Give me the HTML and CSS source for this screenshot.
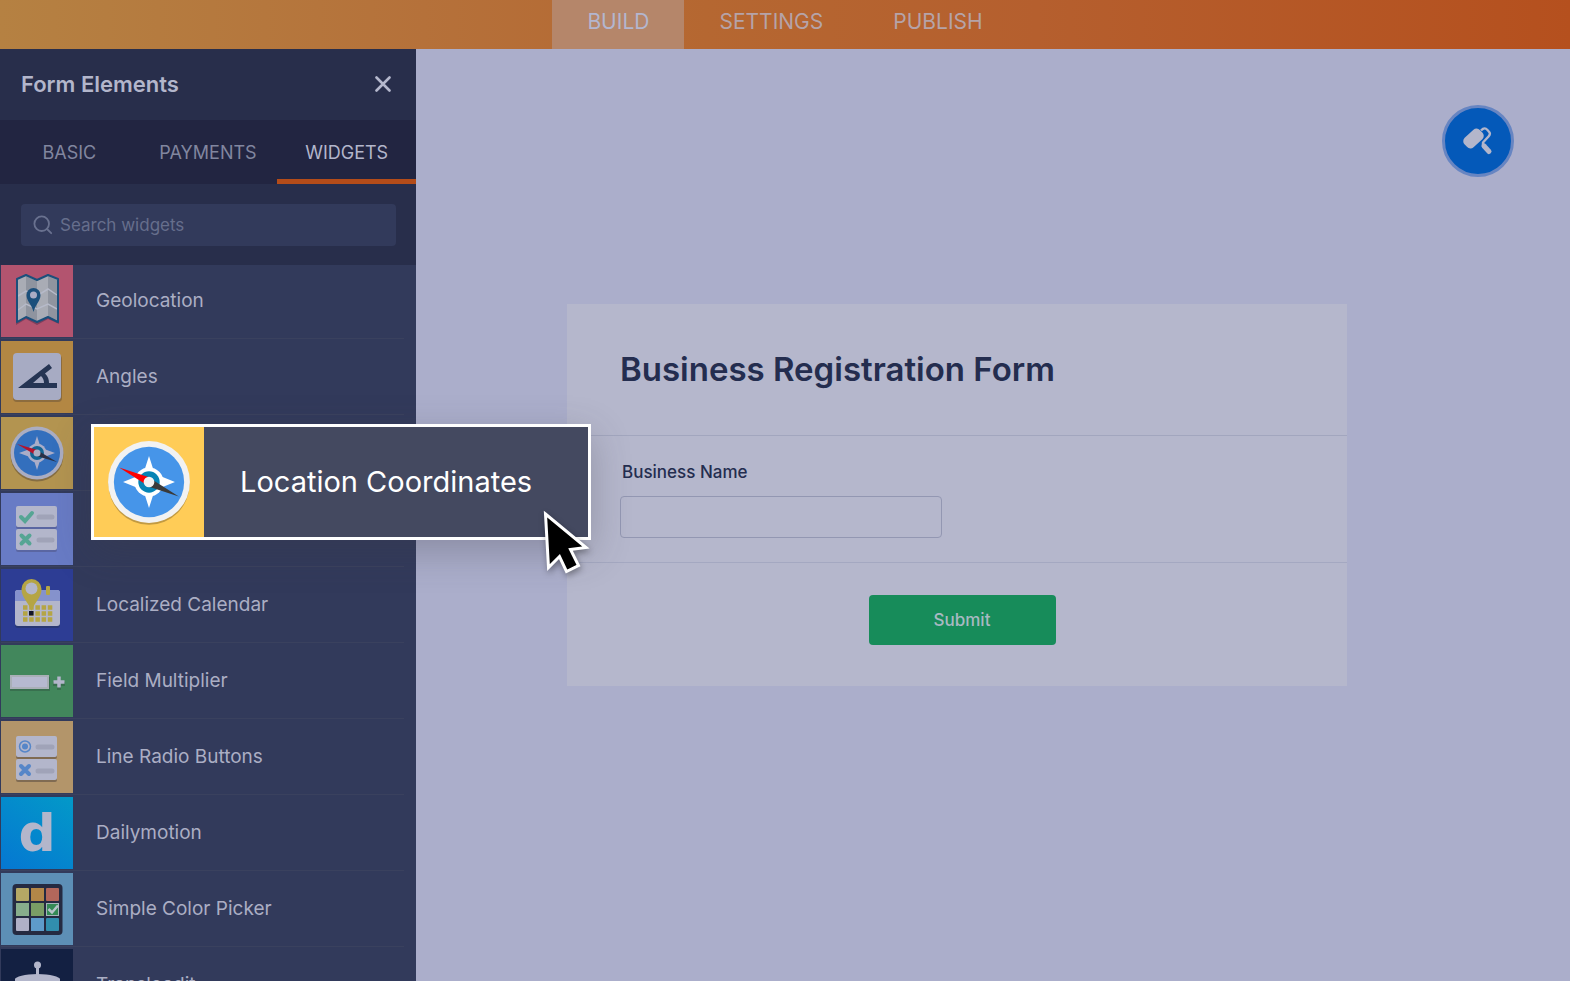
FILE: index.html
```html
<!DOCTYPE html>
<html lang="en">
<head>
  <meta charset="UTF-8" />
  <meta name="viewport" content="width=device-width, initial-scale=1.0"/>
  <title>Form Builder</title>
  <link rel="stylesheet" href="styles.css">
</head>
<body>
  <header class="topbar">
    <nav class="steps">
      <a href="#build" class="step active">BUILD</a>
      <a href="#settings" class="step">SETTINGS</a>
      <a href="#publish" class="step">PUBLISH</a>
    </nav>
  </header>

  <div class="builder">
    <aside class="sidebar">
      <div class="sidebar-head">
        <h2>Form Elements</h2>
        <button type="button" class="close" aria-label="Close">
          <svg width="16" height="16" viewBox="0 0 16 16"><path d="M1.500 1.500 14.500 14.500M14.500 1.500 1.500 14.500" fill="none" stroke="#b5b8cd" stroke-width="2.600" stroke-linecap="round"/></svg>
        </button>
      </div>

      <div class="tabs">
        <button type="button" class="tab">BASIC</button>
        <button type="button" class="tab">PAYMENTS</button>
        <button type="button" class="tab active">WIDGETS</button>
      </div>

      <div class="search">
        <label class="search-box">
          <svg width="20" height="20" viewBox="0 0 20 20" fill="none" stroke="#69718f" stroke-width="1.800" stroke-linecap="round"><circle cx="8.700" cy="8.700" r="7.300"/><path d="M14 14l4.200 4.200"/></svg>
          <input type="text" name="search" placeholder="Search widgets" aria-label="Search widgets" />
        </label>
      </div>

      <ul class="widgets">
        <li class="widget">
          <svg class="tile pink" viewBox="0 0 72 72">
            <path d="M15 16l10-5 11 6 11-6 11 5v43l-11-5-11 6-11-6-10 6z" fill="#7f3f5c"/>
            <path d="M16 14l9-4 11 5 11-5 10 4v43l-10-5-11 5-11-5-9 5z" fill="#a9acb5"/>
            <path d="M25 11l11 5v40l-11-5zM47 11l9 4v40l-9-4z" fill="#8f949f"/>
            <path d="M17 31l8-5 11 5 11-7 9 6M17 45l8-6 11 5 11-5 9 5" fill="none" stroke="#b6bac9" stroke-width="1.500"/>
            <path d="M16 14l9-4 11 5 11-5 10 4v43l-10-5-11 5-11-5-9 5z" fill="none" stroke="#1b4f7b" stroke-width="2" stroke-linejoin="round"/>
            <path d="M32.500 47c-2-8-7-11-7-17a7 7 0 0 1 14 0c0 6-5 9-7 17z" fill="#1b4f7b"/>
            <circle cx="32.500" cy="30" r="3.500" fill="#a9acc4"/>
          </svg>
          <span>Geolocation</span>
        </li>
        <li class="widget">
          <svg class="tile amber" viewBox="0 0 72 72">
            <rect x="12" y="14" width="49" height="47" rx="4" fill="#8d6c3d"/>
            <rect x="12" y="12" width="48" height="47" rx="4" fill="#a7abc3"/>
            <path d="M17 47 48 23l3 4-7 5.500c3 3 4 6 4 9.500h8v5zM32 42h11c0-3-1-5-3-7z" fill="#253453" fill-rule="evenodd"/>
          </svg>
          <span>Angles</span>
        </li>
        <li class="widget">
          <svg class="tile gold" viewBox="0 0 72 72">
            <circle cx="36" cy="38" r="26.500" fill="#856d42"/>
            <circle cx="36" cy="36" r="26.500" fill="#aaadc2"/>
            <circle cx="36" cy="36" r="23" fill="#336fbd"/>
            <path d="M36 19l3.500 11 5 2.500L54 36l-9.500 3.500-5 2.500L36 53l-3.500-11-5-2.500L18 36l9.500-3.500 5-2.500z" fill="#aaadc8"/>
            <circle cx="36" cy="36" r="9.500" fill="#aaadc8"/>
            <circle cx="36" cy="36" r="7" fill="#146593"/>
            <path d="M16 27l20.500 6-2 5z" fill="#b3142d"/>
            <path d="M56 45l-20.500-6 2-5z" fill="#2a3045"/>
            <circle cx="36" cy="36" r="3.500" fill="#aaadc2"/>
          </svg>
        </li>
        <li class="widget">
          <svg class="tile violet" viewBox="0 0 72 72">
            <rect x="15" y="15" width="41" height="21" rx="2" fill="#5a66a2"/>
            <rect x="15" y="38" width="41" height="21" rx="2" fill="#5a66a2"/>
            <rect x="15" y="13" width="41" height="21" rx="2" fill="#b3b6cb"/>
            <rect x="15" y="36" width="41" height="21" rx="2" fill="#b3b6cb"/>
            <path d="M38 24h13M38 47h13" stroke="#a0a3b8" stroke-width="5" stroke-linecap="round"/>
            <path d="M20 24l4 4 7-8M20.500 42.500l8 8M28.500 42.500l-8 8" fill="none" stroke="#56a594" stroke-width="4" stroke-linecap="round"/>
          </svg>
        </li>
        <li class="widget">
          <svg class="tile blue" viewBox="0 0 72 72">
            <rect x="14" y="23" width="45" height="36" rx="3" fill="#283774"/>
            <rect x="14" y="21" width="45" height="36" rx="3" fill="#b3b6cb"/>
            <path d="M14 32v-8a3 3 0 0 1 3-3h39a3 3 0 0 1 3 3v8z" fill="#8592cc"/>
            <path d="M22 38.500h30M22 44.500h30M22 50.500h30" stroke="#b5a544" stroke-width="4.500" stroke-dasharray="4.500 1.700"/>
            <rect x="28" y="42" width="4.500" height="4.500" fill="#12142a"/>
            <rect x="45" y="17" width="4" height="9" rx="1" fill="#b5a544"/>
            <path d="M30.500 42c-3-9-10-13-10-22a10 10 0 0 1 20 0c0 9-7 13-10 22z" fill="#b5a544"/>
            <circle cx="30.500" cy="19.500" r="6" fill="#b3b6cb"/>
          </svg>
          <span>Localized Calendar</span>
        </li>
        <li class="widget">
          <svg class="tile green" viewBox="0 0 72 72">
            <rect x="9" y="32" width="40" height="14" fill="#39704f"/>
            <rect x="10" y="31" width="37" height="12" fill="#b6b9d0" stroke="#a9afb7" stroke-width="2"/>
            <path d="M58 33v12M52 39h12" stroke="#39704f" stroke-width="4"/>
            <path d="M58 31.500v11M52.500 37h11" stroke="#b3b6cb" stroke-width="3.500"/>
          </svg>
          <span>Field Multiplier</span>
        </li>
        <li class="widget">
          <svg class="tile sand" viewBox="0 0 72 72">
            <rect x="15" y="17" width="41" height="21" rx="2" fill="#806b52"/>
            <rect x="15" y="40" width="41" height="21" rx="2" fill="#806b52"/>
            <rect x="15" y="15" width="41" height="21" rx="2" fill="#b3b6cb"/>
            <rect x="15" y="38" width="41" height="21" rx="2" fill="#b3b6cb"/>
            <path d="M37 26h14M37 50h14" stroke="#a0a3b8" stroke-width="5" stroke-linecap="round"/>
            <circle cx="24" cy="25.500" r="5.500" fill="none" stroke="#5686c8" stroke-width="1.500"/>
            <circle cx="24" cy="25.500" r="3" fill="#5686c8"/>
            <path d="M20 45l8 8M28 45l-8 8" stroke="#5686c8" stroke-width="4" stroke-linecap="round"/>
          </svg>
          <span>Line Radio Buttons</span>
        </li>
        <li class="widget">
          <div class="tile sky">d</div>
          <span>Dailymotion</span>
        </li>
        <li class="widget">
          <svg class="tile steel" viewBox="0 0 72 72">
            <rect x="11.500" y="11" width="50" height="51" rx="4" fill="#252a41"/>
            <rect x="15" y="15" width="13" height="13" rx="1" fill="#b5a865"/>
            <rect x="30" y="15" width="13" height="13" fill="#b38748"/>
            <rect x="45" y="15" width="13" height="13" rx="1" fill="#b3675b"/>
            <rect x="15" y="30" width="13" height="13" fill="#88ad8c"/>
            <rect x="30" y="30" width="13" height="13" fill="#7a9d65"/>
            <rect x="45.500" y="30.500" width="12" height="12" fill="#348a55" stroke="#a4b5ba"/>
            <rect x="15" y="45" width="13" height="13" rx="1" fill="#b0b0c7"/>
            <rect x="30" y="45" width="13" height="13" fill="#5e9bca"/>
            <rect x="45" y="45" width="13" height="13" rx="1" fill="#318eae"/>
            <path d="M47.500 36l3.500 3.500 6-7" fill="none" stroke="#b6c4c9" stroke-width="2.500"/>
          </svg>
          <span>Simple Color Picker</span>
        </li>
        <li class="widget">
          <svg class="tile navy" viewBox="0 0 72 72">
            <circle cx="36.500" cy="16" r="3.500" fill="#b3b6cb"/>
            <path d="M36.500 16v12" stroke="#b3b6cb" stroke-width="3"/>
            <path d="M14 36v-6c0-2 10-5 22.500-5S59 28 59 30v6z" fill="#b3b6cb"/>
          </svg>
          <span>Transloadit</span>
        </li>
      </ul>
    </aside>

    <main class="canvas">
      <button type="button" class="designer" aria-label="Form Designer">
        <svg width="30" height="30" viewBox="0 0 30 30">
          <rect x="0" y="6" width="21" height="13" rx="4.500" transform="rotate(-43 10.500 12.500)" fill="#b3b6cb"/>
          <path d="M18 4.500c3-3 4.500-2.500 6.500-.5 3 3 3 4 1 6.500l-5.500 6v4" fill="none" stroke="#b3b6cb" stroke-width="2.400" stroke-linejoin="round"/>
          <path d="M21 20l5 5.500" stroke="#b3b6cb" stroke-width="5" stroke-linecap="round"/>
        </svg>
      </button>

      <form class="form">
        <h1>Business Registration Form</h1>
        <div class="field">
          <label for="businessName">Business Name</label>
          <input type="text" id="businessName" name="businessName" />
        </div>
        <div class="actions">
          <button type="submit">Submit</button>
        </div>
      </form>
    </main>
  </div>

  <!-- widget being dragged onto the form -->
  <div class="dragged">
    <svg class="drag-icon" viewBox="0 0 72 72">
      <circle cx="36" cy="37.500" r="26.500" fill="#c29a42"/>
      <circle cx="36" cy="36" r="26.800" fill="#f2f2f2"/>
      <circle cx="36" cy="36" r="23" fill="#4695e9"/>
      <path d="M36 19l3.500 11 5 2.500L53 36l-8.500 3.500-5 2.500L36 53l-3.500-11-5-2.500L19 36l8.500-3.500 5-2.500z" fill="#fff"/>
      <circle cx="36" cy="36" r="9.500" fill="#fff"/>
      <circle cx="36" cy="36" r="7" fill="#0684b5"/>
      <path d="M16.500 26.500 36.500 33l-2 5z" fill="#fe0000"/>
      <path d="M55.500 45.500 35.500 39l2-5z" fill="#3a3a3a"/>
      <circle cx="36" cy="36" r="3.500" fill="#f2f2f2"/>
    </svg>
    <span>Location Coordinates</span>
    <svg class="cursor" width="52" height="68" viewBox="0 0 52 68">
      <path d="M2.500 5 43 38.500 27.500 40.500 35.500 56.500 23.500 62.500 16.500 47.500 5.500 58.500z" fill="#000" stroke="#fff" stroke-width="3"/>
    </svg>
  </div>
</body>
</html>
```

FILE: styles.css
```css
* {
  box-sizing: border-box;
}
body {
  margin: 0;
  height: 100vh;
  display: flex;
  flex-direction: column;
  overflow: hidden;
  position: relative;
  font-family: Inter, sans-serif;
  background: #abaecb;
}
button, input {
  font-family: inherit;
}
svg {
  display: block;
}

/* top bar */
.topbar {
  flex: none;
  height: 49px;
  background: linear-gradient(90deg, #b58142, #b5713a 27%, #b56731 45%, #b55f2e 66%, #b5501e);
}
.steps {
  display: flex;
  justify-content: center;
  height: 100%;
}
.step {
  display: flex;
  align-items: center;
  padding: 0 35px 6px;
  font-size: 21px;
  color: #b5a3a8;
  text-decoration: none;
}
.step.active {
  background: #b5866a;
  color: #b3b6cf;
}

.builder {
  flex: 1;
  min-height: 0;
  display: flex;
}

/* sidebar */
.sidebar {
  flex: none;
  width: 416px;
  overflow: hidden;
  background: #323a5b;
}
.sidebar-head {
  display: flex;
  align-items: center;
  justify-content: space-between;
  height: 71px;
  padding: 0 25px 2px 21px;
  background: #282e4b;
}
.sidebar-head h2 {
  margin: 0;
  font-size: 22px;
  font-weight: 600;
  color: #b3b6cb;
}
.close {
  padding: 0;
  border: none;
  background: none;
  cursor: pointer;
}
.tabs {
  display: grid;
  grid-template-columns: repeat(3, 1fr);
  height: 64px;
  background: #222541;
}
.tab {
  padding: 6px 0 0;
  border: none;
  border-bottom: 5px solid transparent;
  background: none;
  font-size: 18px;
  color: #81869f;
  cursor: pointer;
}
.tab.active {
  color: #b3b6cb;
  border-bottom-color: #b44c19;
}
.search {
  height: 81px;
  padding: 20px 20px 0 21px;
  background: #282e4b;
}
.search-box {
  display: flex;
  align-items: center;
  gap: 7px;
  height: 42px;
  padding: 0 12px;
  border-radius: 4px;
  background: #323a5b;
}
.search-box input {
  flex: 1;
  min-width: 0;
  padding: 0;
  border: none;
  outline: none;
  background: none;
  font-size: 17px;
  color: #b3b6cb;
}
.search-box input::placeholder {
  color: #666e8c;
}
.widgets {
  margin: 0;
  padding: 0 12px 0 1px;
  list-style: none;
}
.widget {
  display: flex;
  align-items: center;
  gap: 23px;
  height: 74px;
  margin-bottom: 2px;
  padding-bottom: 1px;
  border-bottom: 1px solid #3a415e;
  font-size: 19px;
  color: #abaec4;
}
.widget span {
  padding-bottom: 2px;
}
.tile {
  flex: none;
  width: 72px;
  height: 72px;
}
.pink { background: #b3546f; }
.amber { background: #b38743; }
.gold { background: #b39450; }
.violet { background: #687bc5; }
.blue { background: #2d3d94; }
.green { background: #42875c; }
.sand { background: #b3956a; }
.steel { background: #5d8fb6; }
.navy { background: #132042; }
.sky {
  background: linear-gradient(35deg, #0577d2, #0399c8);
  color: #b3b6cb;
  font-family: "DejaVu Sans", sans-serif;
  font-size: 52px;
  font-weight: bold;
  line-height: 72px;
  text-align: center;
}

/* canvas */
.canvas {
  flex: 1;
  min-width: 0;
  position: relative;
  padding: 255px 223px 0 151px;
}
.designer {
  position: absolute;
  top: 56px;
  right: 56px;
  display: flex;
  align-items: center;
  justify-content: center;
  width: 72px;
  height: 72px;
  padding: 0;
  border: 3px solid #6785c2;
  border-radius: 50%;
  background: #0459b9;
  cursor: pointer;
}
.form {
  background: #b5b7cc;
  color: #242d4f;
}
.form h1 {
  margin: 0;
  padding: 43px 53px 44px;
  border-bottom: 1px solid #a2a6be;
  font-size: 33px;
  font-weight: 600;
  line-height: 44px;
}
.field {
  display: flex;
  flex-direction: column;
  gap: 14px;
  padding: 26px 53px 24px;
  border-bottom: 1px solid #a4a8c1;
}
.field label {
  padding-left: 2px;
  font-size: 17px;
  font-weight: 500;
  line-height: 20px;
}
.field input {
  width: 322px;
  height: 42px;
  padding: 0 10px;
  border: 1px solid #9397b2;
  border-radius: 4px;
  background: none;
  font-size: 17px;
}
.actions {
  display: flex;
  justify-content: center;
  padding: 32px 43px 41px 53px;
}
.actions button {
  width: 187px;
  height: 50px;
  border: none;
  border-radius: 4px;
  background: #178c5a;
  color: #a9b9c2;
  font-size: 17px;
  font-weight: 500;
  cursor: pointer;
}

/* drag preview */
.dragged {
  position: absolute;
  top: 424px;
  left: 91px;
  display: flex;
  align-items: center;
  gap: 36px;
  width: 500px;
  height: 116px;
  border: 3px solid #fff;
  background: #444960;
  color: #fff;
  font-size: 29px;
  box-shadow: 0 12px 36px rgba(60, 60, 70, 0.3);
}
.dragged span {
  padding-bottom: 2px;
}
.drag-icon {
  flex: none;
  width: 110px;
  height: 110px;
  background: #ffcc57;
}
.cursor {
  position: absolute;
  top: 82px;
  left: 449px;
  filter: drop-shadow(1px 3px 3px rgba(0, 0, 0, 0.35));
}
```
